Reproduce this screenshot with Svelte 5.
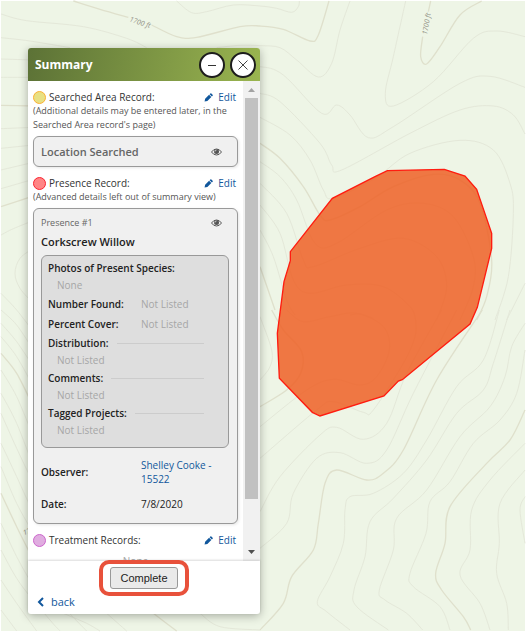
<script>
	let areaShown = $state(true);
	let presenceShown = $state(true);

	// contour points, three units to a pixel, '!' marks an index contour
	const tiles = [
		{ x: 780, y: 0, lines: [
			'-250,3 -205,38 -160,35 -80,15 0,18 50,25 95,37 115,20 118,3',
			'!-325,75 -250,110 -190,112 -60,80 0,78 70,88 150,123 175,105 207,3',
			'-130,143 -60,136 0,137 60,143 110,180 175,231 215,190 240,90 270,3',
			'-60,205 0,200 70,225 185,340 230,315 270,345 325,413 400,380 600,250 690,229 795,262',
			'437,3 400,170 376,280 400,318 520,245 640,115 710,93 795,110',
			'!512,3 505,35',
			'!488,110 482,170 500,192 540,140 600,45 665,3',
			'0,280 60,305 180,430 215,495 245,510 450,400 600,330 700,318 760,345 795,402',
			'0,352 90,405 150,480 190,570 220,595 345,535 450,460 600,421 700,450 750,550 760,640 745,830 705,960',
			'!0,430 60,475 130,560 180,645 210,660 300,620 400,560 520,523 600,540 660,610 695,780 680,890 650,960',
			'0,485 60,530 110,600 165,730 230,730 380,630 490,610 580,650 640,770 640,860 600,960',
			'0,550 80,640 130,780 160,800 300,745 430,715 530,770 560,860 530,960',
			'0,615 60,700 100,840 150,880 260,855 370,860 450,920 467,960',
			'0,690 40,770 80,900 105,945',
			'270,945 300,942 340,955',
			'!0,800 45,930',
			'795,850 740,960'
		] },
		{ x: 780, y: 930, lines: [
			'467,30 465,80 430,160 340,300 310,307 220,275 170,300 0,445',
			'80,0 130,35 210,20 290,10 370,50 388,120 350,200 300,225 220,208 140,240 0,350',
			'!35,0 70,60 125,125 122,190 80,240 0,290',
			'0,20 35,120 30,170 0,210',
			'0,605 60,500 180,375 230,352 310,388 380,340 440,190 545,0',
			'0,715 80,640 100,550 170,445 240,428 320,460 380,420 460,250 590,0',
			'!667,0 530,210 430,420 370,490 320,510 230,480 195,520 175,640 160,720 95,800 70,880 0,960',
			'718,0 670,150 590,230 500,390 430,490 340,550 270,560 255,600 250,700 210,800 172,875 200,905 270,960',
			'750,0 700,160 670,240 590,310 500,450 400,565 330,635 315,740 282,840 290,890 385,960',
			'795,40 755,110 735,200 690,290 600,380 500,540 410,625 400,720 358,840 375,870 440,910 488,960',
			'795,120 770,250 720,330 640,400 570,515 510,575 498,670 450,790 460,830 540,890 570,960',
			'!795,300 750,390 680,460 570,590 555,700 527,790 545,840 610,920 632,960',
			'795,400 690,510 635,600 630,720 600,795 660,880 690,960',
			'795,480 720,580 718,700 710,790 740,880 745,960',
			'795,560 780,600 795,700'
		] },
		{ x: 0, y: 0, lines: [
			'!220,3 300,28 385,52',
			'3,42 80,62 250,80 380,115 440,143',
			'3,113 90,123 210,143',
			'3,177 100,180',
			'3,232 100,232',
			'!3,316 100,318',
			'3,386 100,382',
			'3,445 100,435',
			'3,510 100,487',
			'3,566 100,538',
			'!3,620 100,588',
			'3,705 40,686 100,662',
			'100,745 60,775 45,820 60,865 100,910',
			'3,880 50,930 100,995',
			'3,930 50,975 100,1050',
			'3,970 50,1025 100,1100',
			'3,1010 50,1070 100,1160',
			'!3,1060 50,1120 100,1220',
			'3,1110 50,1190 100,1310',
			'3,1180 50,1270 100,1400',
			'3,1240 50,1345 100,1450',
			'3,1330 50,1430 100,1540',
			'3,1400 50,1510 100,1600',
			'!3,1480 50,1580 100,1680',
			'3,1570 50,1670 100,1760',
			'3,1650 60,1750 150,1860 180,1893',
			'3,1740 50,1810 110,1893',
			'3,1830 50,1893',
			'100,1710 200,1830 260,1893',
			'190,1840 260,1870 300,1893',
			'320,1840 380,1893',
			'!460,1840 530,1893',
			'600,1840 660,1880 780,1890'
		] }
	];

	const searchArea = '1162,512 1333,508 1395,528 1430,568 1475,700 1475,745 1432,922 1410,972 1207,1139 1195,1143 1152,1188 960,1248 937,1237 838,1135 832,1000 852,845 871,782 871,755 997,595 1125,530';

	// smooth curve through the points
	const curve = (line) => {
		const p = line.replace('!', '').split(' ').map((s) => s.split(',').map(Number));
		let d = `M${p[0]}`;
		for (let i = 0; i < p.length - 1; i++) {
			const a = p[i - 1] || p[i];
			const b = p[i];
			const c = p[i + 1];
			const e = p[i + 2] || c;
			d += `C${b[0] + (c[0] - a[0]) / 6},${b[1] + (c[1] - a[1]) / 6} ${c[0] - (e[0] - b[0]) / 6},${c[1] - (e[1] - b[1]) / 6} ${c}`;
		}
		return d;
	};
</script>

{#snippet heading(title, kind)}
	<div class="heading">
		<span class="dot {kind}"></span>
		<h2>{title}</h2>
		<a href="#edit" class="edit">
			<svg viewBox="0 0 16 16" width="9" height="9">
				<path d="M1 15l1-5 7-7 4 4-7 7zM10 2l1.300-1.300q.9-.9 1.800 0l2.200 2.200q.9.900 0 1.800L14 6z" fill="currentColor" />
			</svg>
			Edit
		</a>
	</div>
{/snippet}

{#snippet eye()}
	<svg viewBox="0 0 22 16" width="11" height="8">
		<path d="M1 8q4-6 10-6t10 6q-4 6-10 6T1 8z" fill="none" stroke="currentColor" stroke-width="2" />
		<circle cx="11" cy="7" r="5" fill="currentColor" />
		<path d="M8 7q0-3 3-3" fill="none" stroke="#f0f0f0" stroke-width="1.500" />
	</svg>
{/snippet}

<main>
	<svg class="map" viewBox="0 0 1578 1896" preserveAspectRatio="xMinYMin slice">
		<rect x="3" y="3" width="1572" height="1890" fill="#eef5e6" />
		{#each tiles as tile}
			<g transform="translate({tile.x} {tile.y})" fill="none">
				{#each tile.lines as line}
					<path d={curve(line)} stroke={line[0] === '!' ? '#dfe0cc' : '#e4e8d9'} stroke-width={line[0] === '!' ? 4 : 3} />
				{/each}
			</g>
		{/each}
		<text transform="translate(387 64) rotate(18)" class="elevation">1700 ft</text>
		<text transform="translate(1281 105) rotate(-80)" class="elevation">1700 ft</text>
		<text transform="translate(72 1606) rotate(-20)" class="elevation">17</text>
		<polygon points={searchArea} fill="#ee6026" fill-opacity="0.850" stroke="#ff1c10" stroke-width="4" />
	</svg>

	<section class="panel">
		<header>
			<h1>Summary</h1>
			<button class="round" aria-label="Minimize">
				<svg viewBox="0 0 22 22" width="22" height="22"><path d="M7 11.500h8" stroke="#333" /></svg>
			</button>
			<button class="round" aria-label="Close">
				<svg viewBox="0 0 22 22" width="22" height="22"><path d="M6.500 6.500l9 9m0-9l-9 9" stroke="#444" /></svg>
			</button>
		</header>

		<div class="scroller">
			<div class="content">
				{@render heading('Searched Area Record:', 'searched')}
				<p class="note">(Additional details may be entered later, in the Searched Area record's page)</p>
				<div class="card location">
					<span>Location Searched</span>
					<button class="eye" aria-label="Show on map" onclick={() => (areaShown = !areaShown)}>{@render eye()}</button>
				</div>

				{@render heading('Presence Record:', 'presence')}
				<p class="note">(Advanced details left out of summary view)</p>
				<div class="card">
					<div class="number">
						<span>Presence #1</span>
						<button class="eye" aria-label="Show on map" onclick={() => (presenceShown = !presenceShown)}>{@render eye()}</button>
					</div>
					<h3>Corkscrew Willow</h3>
					<dl class="details">
						<dt>Photos of Present Species:</dt>
						<dd>None</dd>
						<div class="pair"><dt>Number Found:</dt><dd>Not Listed</dd></div>
						<div class="pair"><dt>Percent Cover:</dt><dd>Not Listed</dd></div>
						<dt class="ruled">Distribution:</dt>
						<dd>Not Listed</dd>
						<dt class="ruled">Comments:</dt>
						<dd>Not Listed</dd>
						<dt class="ruled">Tagged Projects:</dt>
						<dd>Not Listed</dd>
					</dl>
					<dl class="meta">
						<dt>Observer:</dt>
						<dd><a href="#observer">Shelley Cooke - 15522</a></dd>
						<dt>Date:</dt>
						<dd>7/8/2020</dd>
					</dl>
				</div>

				{@render heading('Treatment Records:', 'treatment')}
				<p class="none">None</p>
			</div>
			<div class="scrollbar">
				<svg viewBox="0 0 17 17" width="17" height="17"><path d="M5 11l3.500-4 3.500 4z" fill="#a3a3a3" /></svg>
				<div class="thumb"></div>
				<svg viewBox="0 0 17 17" width="17" height="17"><path d="M5 6l3.500 4L12 6z" fill="#505050" /></svg>
			</div>
		</div>

		<footer>
			<div class="highlight"><button class="complete">Complete</button></div>
			<a href="#back" class="back">
				<svg viewBox="0 0 8 10" width="8" height="10"><path d="M6 1L2 5l4 4" fill="none" stroke="currentColor" stroke-width="2" /></svg>
				back
			</a>
		</footer>
	</section>
</main>

<style>
:global(body) {
	font-family: "Open Sans", sans-serif;
	font-size: 10px;
	line-height: 14px;
	color: #222;
}

main {
	position: relative;
	box-sizing: border-box;
	min-height: 100vh;
	padding: 48px 28px 18px;
	overflow: hidden;
}

.map {
	position: absolute;
	top: 0;
	left: 0;
	width: 100%;
	height: 100%;
}

.elevation {
	font-size: 21px;
	font-style: italic;
	fill: #8c8c80;
}

h1, h2, h3, p, dl, dt, dd {
	margin: 0;
	font-size: inherit;
}

h2, h3, dt {
	font-weight: 600;
}

h2 {
	color: #333;
	font-weight: 500;
}

a {
	color: #11579c;
	text-decoration: none;
}

button {
	padding: 0;
	cursor: pointer;
}

.panel {
	position: relative;
	width: 232px;
	background: white;
	border-radius: 3px;
	box-shadow: 0 2px 10px rgba(0, 0, 0, 0.3);
}

header {
	display: flex;
	align-items: center;
	gap: 5px;
	height: 33px;
	padding: 0 4px 0 7px;
	border-radius: 3px 3px 0 0;
	background: linear-gradient(100deg, #5c7236, #9ab550);
}

h1 {
	flex: 1;
	color: white;
	font-size: 12px;
	font-weight: 700;
}

.round {
	width: 26px;
	height: 26px;
	border: 2px solid #1c1c1c;
	border-radius: 50%;
	background: white;
}

.round svg {
	display: block;
}

.scroller {
	display: flex;
	height: 480px;
}

.content {
	flex: 1;
	min-width: 0;
	padding: 9px 5px 0;
	overflow: hidden;
}

.heading {
	display: flex;
	align-items: center;
	gap: 3px;
	height: 14px;
}

.dot {
	box-sizing: border-box;
	width: 13px;
	height: 13px;
	border: 1px solid;
	border-radius: 50%;
}

.searched {
	border-color: #fbb034;
	background: #e8e083;
}

.presence {
	border-color: #fb2330;
	background: #ff8585;
}

.treatment {
	border-color: #cc66cc;
	background: #e0ade0;
}

.edit {
	display: flex;
	align-items: center;
	gap: 5px;
	margin-left: auto;
	padding-right: 2px;
}

.note {
	font-size: 9px;
	color: #555;
}

.card {
	box-sizing: border-box;
	margin: 4px 0 9px;
	padding: 5px 8px 5px 7px;
	border: 1px solid #999;
	border-radius: 6px;
	background: #f0f0f0;
	box-shadow: 1px 1px 3px rgba(0, 0, 0, 0.1);
}

.location, .number {
	display: flex;
	align-items: center;
	justify-content: space-between;
	color: #666;
}

.location {
	height: 31px;
	font-size: 11px;
	font-weight: 600;
}

.number {
	height: 18px;
	font-size: 9px;
}

.eye {
	display: flex;
	margin-right: 7px;
	border: 0;
	background: none;
	color: #555;
}

h3 {
	font-size: 11px;
	line-height: 20px;
}

.details {
	margin-top: 3px;
	padding: 3px 24px 8px 6px;
	border: 1px solid #999;
	border-radius: 6px;
	background: #dedede;
}

.details dt {
	line-height: 18px;
}

.details dd {
	padding-left: 9px;
	color: #a6a6a6;
	line-height: 17px;
}

.details .pair {
	display: grid;
	grid-template-columns: 93px 1fr;
}

.details .pair dt, .details .pair dd {
	padding: 0;
	line-height: 20px;
}

.ruled {
	display: flex;
	align-items: center;
	gap: 8px;
}

.ruled::after {
	content: "";
	flex: 1;
	border-top: 1px solid #ccc;
}

.meta {
	display: grid;
	grid-template-columns: 100px 1fr;
	align-items: center;
	row-gap: 11px;
	padding: 10px 0 7px;
}

.none {
	padding-top: 7px;
	color: #a6a6a6;
	text-align: center;
}

.scrollbar {
	display: flex;
	flex-direction: column;
	width: 17px;
	background: #f1f1f1;
}

.thumb {
	height: 401px;
	margin: 0 2px;
	background: #c1c1c1;
}

.scrollbar svg:last-child {
	margin-top: auto;
}

footer {
	display: flex;
	flex-direction: column;
	padding-bottom: 6px;
	box-shadow: 0 -1px 2px rgba(0, 0, 0, 0.15);
	position: relative;
}

.highlight {
	align-self: center;
	margin-top: -1px;
	padding: 3px 7px;
	border: 4px solid #e8513b;
	border-radius: 10px;
}

.complete {
	display: block;
	width: 68px;
	height: 22px;
	border: 1px solid #999;
	border-radius: 3px;
	background: #eaeaea;
	color: #222;
	font: 11px "Liberation Sans", Arial, sans-serif;
}

.back {
	display: flex;
	align-items: center;
	gap: 6px;
	align-self: flex-start;
	margin-left: 9px;
	font-size: 11px;
	line-height: 12px;
}
</style>
